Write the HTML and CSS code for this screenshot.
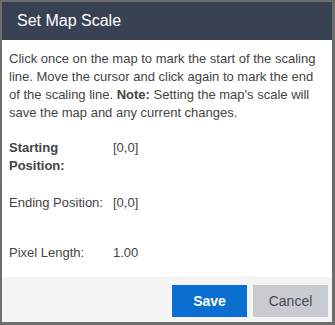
FILE: index.html
```html
<!DOCTYPE html>
<html>
<head>
<meta charset="utf-8">
<link rel="stylesheet" href="styles.css">
</head>
<body>
<div class="dialog">
  <div class="header">Set Map Scale</div>
  <div class="content">
    <p class="intro">Click once on the map to mark the start of the scaling line. Move the cursor and click again to mark the end of the scaling line. <b>Note:</b> Setting the map's scale will save the map and any current changes.</p>
    <div class="row row-start">
      <div class="label bold">Starting Position:</div>
      <div class="value">[0,0]</div>
    </div>
    <div class="row row-end">
      <div class="label">Ending Position:</div>
      <div class="value">[0,0]</div>
    </div>
    <div class="row row-pixel">
      <div class="label">Pixel Length:</div>
      <div class="value">1.00</div>
    </div>
  </div>
  <div class="footer">
    <button class="btn btn-save">Save</button>
    <button class="btn btn-cancel">Cancel</button>
  </div>
</div>
</body>
</html>
```
FILE: styles.css
```css
html, body {
  margin: 0;
  padding: 0;
}
body {
  width: 335px;
  height: 325px;
  background: #6d6d6d;
  font-family: "Liberation Sans", Arial, sans-serif;
  overflow: hidden;
}
.dialog {
  margin: 2px 3px 3px 2px;
  height: 320px;
  background: #ffffff;
  display: flex;
  flex-direction: column;
}
.header {
  height: 38px;
  background: #384252;
  color: #ffffff;
  font-size: 16px;
  line-height: 38px;
  padding-left: 15px;
  flex: none;
}
.content {
  flex: 1;
  padding: 10px 8px 0 7px;
  color: #444444;
  font-size: 13px;
  line-height: 18px;
}
.intro {
  margin: 0 0 17px 0;
}
.intro b {
  font-weight: bold;
}
.row {
  display: flex;
}
.label {
  width: 104px;
  flex: none;
}
.bold {
  font-weight: bold;
  width: 80px;
  margin-right: 24px;
}
.row-end {
  margin-top: 19px;
}
.row-pixel {
  margin-top: 32px;
}
.footer {
  height: 45px;
  flex: none;
  background: #f4f4f4;
  display: flex;
  justify-content: flex-end;
  align-items: flex-start;
  padding: 8px 4px 0 0;
  box-sizing: border-box;
  gap: 6px;
}
.btn {
  width: 75px;
  height: 32px;
  border: none;
  font-family: "Liberation Sans", Arial, sans-serif;
  font-size: 14px;
  padding: 0;
  cursor: pointer;
}
.btn-save {
  background: #0a6fd0;
  color: #ffffff;
  font-weight: bold;
}
.btn-cancel {
  background: #c8cbd0;
  color: #454c55;
}
```
